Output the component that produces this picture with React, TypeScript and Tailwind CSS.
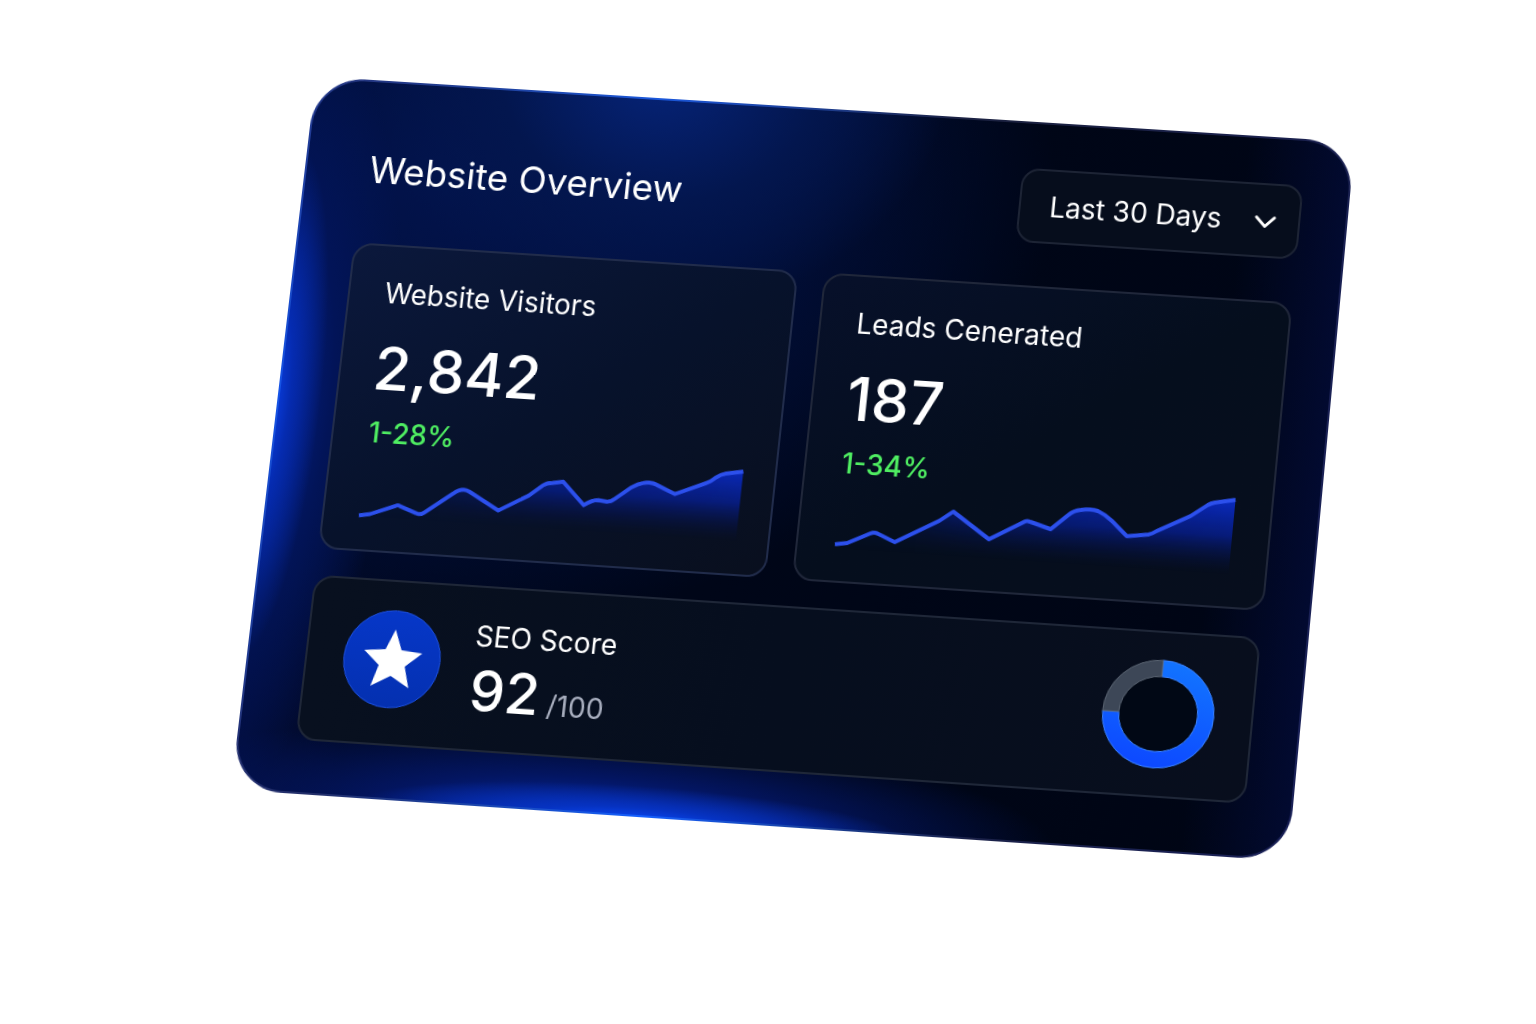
import React from 'react';
import { ChevronDown } from 'lucide-react';

interface StatCardProps {
  id: string;
  title: string;
  value: string;
  change: string;
  line: string;
  width: number;
  className: string;
}

const VISITORS_LINE =
  'M0 75 L11 73 L36 63 Q38 62 40 63 L57 69 Q61 71 65 68 L92 47 Q100 40 108 44 L139 61 L168 44 L181 33 Q185 30 190 30 L201 28 L224 50 Q232 44 238 44 L247 45 Q251 45 254 42 L270 29 Q276 25 281 24 Q289 22 295 25 L314 33 L344 20 Q349 18 353 14 Q358 10 363 9 L380 6';

const LEADS_LINE =
  'M2 72 L14 70 L36 59 Q40 57 44 59 L61 66 L103 42 L116 32 L154 57 L188 37 Q190 36 193 37 L214 43 L230 28 Q235 23 242 22 Q252 20 259 22 Q267 25 274 31 L290 45 L311 42 Q315 41 319 38 L351 21 L367 9 Q370 7 374 6 L394 2';

function StatCard({ id, title, value, change, line, width, className }: StatCardProps) {
  return (
    <article className={`rounded-[20px] border-2 px-[35px] pt-7 pb-4 ${className}`}>
      <h2 className="text-[28px] leading-[38px] text-white">{title}</h2>
      <p className="mt-[22px] -ml-0.5 text-[60px] leading-[68px] font-medium text-white">{value}</p>
      <p className="mt-3 text-[28px] leading-[38px] font-medium text-[#4fee62] [font-feature-settings:'case']">
        {change}
      </p>
      <svg
        viewBox={`0 0 ${width} 92`}
        className="-mt-2.5 h-[92px] w-full overflow-visible"
        preserveAspectRatio="xMinYMin"
        fill="none"
        role="img"
        aria-label={`${title} trend`}
      >
        <defs>
          <linearGradient id={`${id}-fill`} x1="0" y1="0" x2="0" y2="76" gradientUnits="userSpaceOnUse">
            <stop offset="0" stopColor="#0b2fd8" stopOpacity="0.9" />
            <stop offset="0.5" stopColor="#0724b8" stopOpacity="0.6" />
            <stop offset="1" stopColor="#041050" stopOpacity="0" />
          </linearGradient>
          <linearGradient id={`${id}-fade`}>
            <stop offset="0" stopColor="#fff" stopOpacity="0.2" />
            <stop offset="0.45" stopColor="#fff" stopOpacity="0.85" />
            <stop offset="1" stopColor="#fff" />
          </linearGradient>
          <mask id={`${id}-mask`} maskUnits="userSpaceOnUse" x="0" y="0" width={width + 4} height="92">
            <rect width={width + 4} height="92" fill={`url(#${id}-fade)`} />
          </mask>
        </defs>
        <path d={`${line} V92 H0 Z`} fill={`url(#${id}-fill)`} mask={`url(#${id}-mask)`} />
        <path d={line} stroke="#2c50ec" strokeWidth="4" strokeLinejoin="round" />
      </svg>
    </article>
  );
}

function ScoreDonut() {
  return (
    <svg viewBox="0 0 114 110" className="h-[110px] w-[114px]" role="img" aria-label="SEO score chart">
      <defs>
        <linearGradient id="donut" x1="0.6" y1="0" x2="0.4" y2="1">
          <stop offset="0" stopColor="#1274ff" />
          <stop offset="1" stopColor="#0d48ff" />
        </linearGradient>
      </defs>
      <ellipse cx="57" cy="55" rx="40" ry="38" fill="#010815" />
      <path
        d="M57 2 A55 53 0 1 1 2 55 H18 A39 37 0 1 0 57 18 Z"
        fill="url(#donut)"
        stroke="#3a82ff"
        strokeWidth="1"
      />
      <path d="M2 55 A55 53 0 0 1 57 2 V18 A39 37 0 0 0 18 55 Z" fill="#3d4757" stroke="#5a6472" strokeWidth="1" />
    </svg>
  );
}

function SeoCard() {
  return (
    <article className="flex h-[164px] items-center rounded-[20px] border-2 border-[#1f2738] bg-linear-to-r from-[#08101f] via-[#060e1e] to-[#080e1d] pr-[35px] pl-9">
      <div className="mb-2 flex size-[97px] items-center justify-center rounded-full border border-[#1c50e0] bg-linear-to-b from-[#0637c8] to-[#0430b0]">
        <svg viewBox="0 0 60 60" className="size-[60px]" fill="#fff" aria-hidden="true">
          <path d="M30 1 L38 21 L59 23 L43 37 L49 58 L30 47 L11 58 L17 37 L1 23 L22 21 Z" />
        </svg>
      </div>
      <div className="ml-8 pt-[18px]">
        <h2 className="text-[28px] leading-9 text-white">SEO Score</h2>
        <p className="flex items-baseline gap-2 leading-[72px]">
          <span className="text-[56px] font-medium text-white">92</span>
          <span className="text-[28px] text-[#a9afbf]">/100</span>
        </p>
      </div>
      <div className="ml-auto">
        <ScoreDonut />
      </div>
    </article>
  );
}

export default function App() {
  return (
    <main className="flex min-h-screen justify-center overflow-hidden bg-white pt-[106px] pl-14 font-['Inter',sans-serif]">
      <section className="w-full max-w-[1048px] self-start rounded-[50px] bg-[radial-gradient(circle_at_33%_0%,#1b58dc_0%,transparent_30%),radial-gradient(circle_at_0%_45%,#1554e8_0%,transparent_32%),radial-gradient(circle_at_39%_100%,#1560ff_0%,transparent_34%),linear-gradient(100deg,#26347a,#1b2140_60%,#1a2158)] p-[2px] outline outline-transparent [transform:matrix3d(1,0.0655,0,-0.0000063,-0.1063,1,0,-0.0000246,0,0,1,0,0,0,0,1)]">
        <div className="rounded-[48px] bg-[radial-gradient(ellipse_26%_5%_at_38%_101%,#0a4bff_0%,#0632c0_40%,transparent_100%),radial-gradient(ellipse_44%_13%_at_34%_101%,#0528a8_0%,#031560_45%,transparent_100%),radial-gradient(ellipse_5%_36%_at_-1%_46%,#0a42ec_0%,#052bb0_40%,transparent_100%),radial-gradient(ellipse_12%_54%_at_-1%_46%,#03208c_0%,#021458_50%,transparent_100%),radial-gradient(ellipse_28%_34%_at_33%_-4%,#06247a_0%,#03164e_55%,transparent_100%),radial-gradient(ellipse_58%_64%_at_14%_12%,#02134c_0%,#010f3c_50%,transparent_100%),linear-gradient(to_right,#020d3c_0%,transparent_10%,transparent_90%,#020a30_100%),linear-gradient(105deg,#010a2a_0%,#000618_45%,#000514_100%)] pt-[45px] pr-[45px] pb-[51px] pl-14">
          <header className="flex items-end justify-between">
            <h1 className="pl-[7px] text-[37px] leading-[62px] text-white">Website Overview</h1>
            <div className="relative">
              <select
                aria-label="Date range"
                className="h-[75px] w-[282px] appearance-none rounded-[18px] border-2 border-[#1d2435] bg-[#060d1c] pl-[29px] text-[28px] text-white"
              >
                <option>Last 30 Days</option>
              </select>
              <ChevronDown
                className="pointer-events-none absolute top-[21px] right-[17px] size-9 text-white"
                strokeWidth={2}
              />
            </div>
          </header>

          <div className="mt-[43px] grid grid-cols-[448fr_468fr] gap-[26px]">
            <StatCard
              id="visitors"
              title="Website Visitors"
              value="2,842"
              change="1-28%"
              line={VISITORS_LINE}
              width={377}
              className="border-[#212c4b] bg-linear-to-br from-[#0b183c] via-[#07122b] to-[#090f1e]"
            />
            <StatCard
              id="leads"
              title="Leads Cenerated"
              value="187"
              change="1-34%"
              line={LEADS_LINE}
              width={391}
              className="border-[#20273a] bg-linear-to-br from-[#07102a] via-[#050e1d] to-[#070e1d]"
            />
          </div>

          <div className="mt-[26px]">
            <SeoCard />
          </div>
        </div>
      </section>
    </main>
  );
}
